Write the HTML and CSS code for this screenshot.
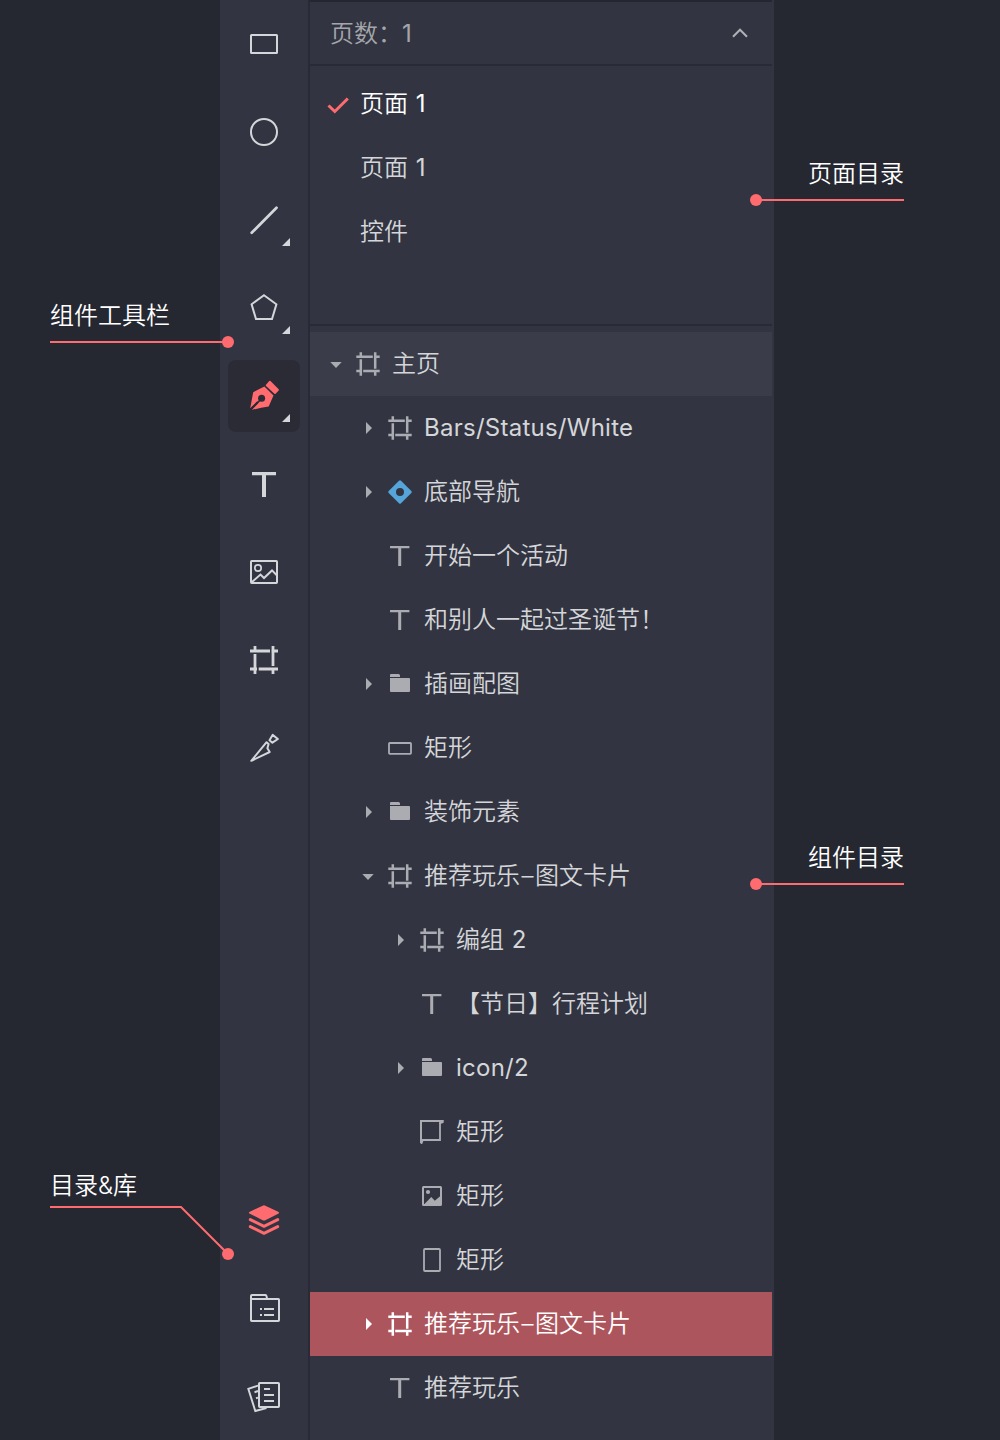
FILE: index.html
```html
<!DOCTYPE html>
<html lang="zh-CN">
<head>
<meta charset="utf-8">
<title>组件目录</title>
<link rel="stylesheet" href="styles.css">
</head>
<body>
<svg class="sprite" aria-hidden="true">
  <symbol id="down" viewBox="0 0 12 12"><path d="M.3 4H11.7L6 10Z" fill="currentColor"/></symbol>
  <symbol id="right" viewBox="0 0 12 12"><path d="M4 0L10 6L4 12Z" fill="currentColor"/></symbol>
  <symbol id="frame" viewBox="0 0 24 24"><path d="M.3 4.8H16.8M18.6 4.8H23.7M4.8.3V5M4.8 7.2V23.7M.3 19H5M7.2 19H23.7M19.2.3V16.8M19.2 19V23.7" fill="none" stroke="currentColor" stroke-width="2.5"/></symbol>
  <symbol id="text" viewBox="0 0 24 24"><path d="M2 2H21.4V4.2H13.2V22H10.2V4.2H2Z" fill="currentColor"/></symbol>
  <symbol id="folder" viewBox="0 0 24 24"><path d="M2 5V3Q2 2 3 2H10.5Q12 2 12 3.5V5ZM2 6H21Q22 6 22 7V19Q22 20 21 20H3Q2 20 2 19Z" fill="currentColor"/></symbol>
  <symbol id="component" viewBox="0 0 24 24"><path fill-rule="evenodd" d="M11 .7Q12-.3 13 .7L23.3 11Q24.3 12 23.3 13L13 23.3Q12 24.3 11 23.3L.7 13Q-.3 12 .7 11ZM12 8A4 4 0 1 0 12 16A4 4 0 1 0 12 8Z" fill="#55a5da"/></symbol>
  <symbol id="rect" viewBox="0 0 24 24"><rect x="1" y="7" width="22" height="10.8" rx=".8" fill="none" stroke="currentColor" stroke-width="1.8"/></symbol>
  <symbol id="portrait" viewBox="0 0 24 24"><rect x="4" y="1" width="16" height="22" rx="1" fill="none" stroke="currentColor" stroke-width="1.8"/></symbol>
  <symbol id="shape" viewBox="0 0 24 24"><path d="M2 20H20V3" fill="none" stroke="currentColor" stroke-width="1.8"/><path d="M22.8 2L20 3M1.6 23L2.5 20.5M1 22.5V1H23" fill="none" stroke="currentColor" stroke-width="2" stroke-linecap="round"/></symbol>
  <symbol id="image" viewBox="0 0 24 24"><rect x="3" y="3" width="18" height="18" rx=".5" fill="none" stroke="currentColor" stroke-width="2"/><circle cx="8" cy="8" r="2.1" fill="currentColor"/><path d="M4 20.5L11.3 13L14.8 16.8L21 11.5V21H4Z" fill="currentColor"/></symbol>
</svg>

<main class="editor">
  <nav class="toolbar">
    <div class="tools">
      <button class="tool"><svg viewBox="0 0 88 88"><rect x="31" y="35" width="26" height="18" rx=".5"/></svg></button>
      <button class="tool"><svg viewBox="0 0 88 88"><circle cx="44" cy="44" r="13"/></svg></button>
      <button class="tool"><svg viewBox="0 0 88 88"><path d="M31.7 56.8L56.5 31.7" stroke-width="2.7" stroke-linecap="round"/><path class="solid" d="M70 62V70H62Z"/></svg></button>
      <button class="tool"><svg viewBox="0 0 88 88"><path d="M44 31.2L56.4 40.3L52 55H36L31.6 40.3Z"/><path class="solid" d="M70 62V70H62Z"/></svg></button>
      <button class="tool active"><svg viewBox="0 0 88 88"><rect class="tile" x="8" y="8" width="72" height="72" rx="8"/><path class="accent" d="M49.2 29Q49.9 28.5 50.5 29.1L58.7 37.2Q59.3 38 58.7 38.6L55.6 41.8Q55 42.3 54.4 41.7L46 34Q45.4 33.3 46 32.7Z"/><path class="accent" d="M44.4 34.6L53.5 43.4L48.7 54.4Q40 55.6 31.8 58L38.7 50.8L37.2 49.3L30.2 56.3L33.2 40.2Q38.5 37.5 44.4 34.6Z"/><circle class="hole" cx="41.6" cy="46.2" r="3.5"/><path d="M31 57.2L41.6 46.6" stroke="#2a2b35" stroke-width="1.5"/><path class="solid" d="M70 62V70H62Z"/></svg></button>
      <button class="tool"><svg viewBox="0 0 88 88"><path class="solid" d="M32 32H56V35.2H46V57H42V35.2H32Z"/></svg></button>
      <button class="tool"><svg viewBox="0 0 88 88"><rect x="31" y="33" width="26" height="22" rx=".7"/><circle cx="38" cy="40" r="3.2" stroke-width="1.7"/><path d="M31.7 54.2L40.5 46.6L44 50L52 42.4L57 47.5"/></svg></button>
      <button class="tool"><svg viewBox="0 0 88 88"><path d="M30 35H50M51.5 35H58M35 30V36M35 38V58M30 53H37M38.7 53H58M53 30V50M53 53V58" stroke-width="2.8"/></svg></button>
      <button class="tool"><svg viewBox="0 0 88 88"><path d="M31.3 56.8L46.6 38.2L48.6 40L47.4 44.2L49.7 48L31.3 56.8Z" stroke-width="2" stroke-linejoin="round"/><path d="M52.6 30.9L57.9 35L52.4 38.7L49.5 36.2Z" stroke-width="2" stroke-linejoin="round"/></svg></button>
    </div>
    <div class="tools">
      <button class="tool"><svg viewBox="0 0 88 88"><path class="accent" d="M43.2 29.4Q44 29 44.8 29.4L58.2 35.8Q60 36.7 58.2 37.7L44.8 44.4Q44 44.8 43.2 44.4L29.8 37.7Q28 36.7 29.8 35.8Z"/><path d="M30.3 43.6L44 50.3L57.7 43.6M30.3 50.6L44 57.3L57.7 50.6" stroke="#ff6b6f" stroke-width="3" stroke-linecap="round"/></svg></button>
      <button class="tool"><svg viewBox="0 0 88 88"><rect x="31" y="35" width="28" height="22" rx=".7"/><path d="M31 35V32Q31 31 32 31H45.5Q46.5 31 47 34.5M40 45H42M44 45H54M40 51H42M44 51H54"/></svg></button>
      <button class="tool"><svg viewBox="0 0 88 88"><rect x="39" y="31" width="20" height="24" rx=".7"/><path d="M38 33.7L28.3 36.8L35.3 59L46.5 56M44 37H50M44 43H54M44 49H54" stroke-width="1.9"/><path d="M34.5 40.2L38 39M36 46.2L38 45.6"/></svg></button>
    </div>
  </nav>

  <section class="panel">
    <header class="pages-head"><span>页数：<span class="digit flush">1</span></span><svg class="chevron" viewBox="0 0 16 10"><path d="M1 8.7L8 1.7L15 8.7"/></svg></header>
    <ul class="pages">
      <li class="page current"><svg class="check" viewBox="0 0 24 18"><path d="M2.5 9.5L8.8 15.5L21.8 2.5"/></svg><span>页面 <span class="digit">1</span></span></li>
      <li class="page"><span>页面 <span class="digit">1</span></span></li>
      <li class="page">控件</li>
    </ul>
    <ul class="tree">
      <li class="row root"><svg class="arrow"><use href="#down"/></svg><svg class="icon"><use href="#frame"/></svg>主页</li>
      <li class="row level1"><svg class="arrow"><use href="#right"/></svg><svg class="icon"><use href="#frame"/></svg><span class="latin">Bars/Status/White</span></li>
      <li class="row level1"><svg class="arrow"><use href="#right"/></svg><svg class="icon"><use href="#component"/></svg>底部导航</li>
      <li class="row level1"><span class="arrow"></span><svg class="icon"><use href="#text"/></svg>开始一个活动</li>
      <li class="row level1"><span class="arrow"></span><svg class="icon"><use href="#text"/></svg>和别人一起过圣诞节！</li>
      <li class="row level1"><svg class="arrow"><use href="#right"/></svg><svg class="icon"><use href="#folder"/></svg>插画配图</li>
      <li class="row level1"><span class="arrow"></span><svg class="icon"><use href="#rect"/></svg>矩形</li>
      <li class="row level1"><svg class="arrow"><use href="#right"/></svg><svg class="icon"><use href="#folder"/></svg>装饰元素</li>
      <li class="row level1"><svg class="arrow"><use href="#down"/></svg><svg class="icon"><use href="#frame"/></svg>推荐玩乐<span class="dash">–</span>图文卡片</li>
      <li class="row level2"><svg class="arrow"><use href="#right"/></svg><svg class="icon"><use href="#frame"/></svg><span>编组 <span class="digit">2</span></span></li>
      <li class="row level2"><span class="arrow"></span><svg class="icon"><use href="#text"/></svg>【节日】行程计划</li>
      <li class="row level2"><svg class="arrow"><use href="#right"/></svg><svg class="icon"><use href="#folder"/></svg><span class="latin">icon/2</span></li>
      <li class="row level2"><span class="arrow"></span><svg class="icon"><use href="#shape"/></svg>矩形</li>
      <li class="row level2"><span class="arrow"></span><svg class="icon"><use href="#image"/></svg>矩形</li>
      <li class="row level2"><span class="arrow"></span><svg class="icon"><use href="#portrait"/></svg>矩形</li>
      <li class="row level1 selected"><svg class="arrow"><use href="#right"/></svg><svg class="icon"><use href="#frame"/></svg>推荐玩乐<span class="dash">–</span>图文卡片</li>
      <li class="row level1"><span class="arrow"></span><svg class="icon"><use href="#text"/></svg>推荐玩乐</li>
    </ul>
  </section>
</main>

<aside class="callout tools-note"><span>组件工具栏</span><svg width="184" height="12" viewBox="0 0 184 12"><path d="M0 6H178"/><circle cx="178" cy="6" r="6"/></svg></aside>
<aside class="callout library-note"><span>目录&amp;库</span><svg width="184" height="60" viewBox="0 0 184 60"><path d="M0 6H131L178 53"/><circle cx="178" cy="53" r="6"/></svg></aside>
<aside class="callout right-note pages-note"><span>页面目录</span><svg width="154" height="12" viewBox="0 0 154 12"><path d="M6 6H154"/><circle cx="6" cy="6" r="6"/></svg></aside>
<aside class="callout right-note tree-note"><span>组件目录</span><svg width="154" height="12" viewBox="0 0 154 12"><path d="M6 6H154"/><circle cx="6" cy="6" r="6"/></svg></aside>
</body>
</html>
```

FILE: styles.css
```css
* { box-sizing: border-box; }

body {
  margin: 0;
  position: relative;
  height: 1440px;
  overflow: hidden;
  background: #252731;
  color: #d5d6d9;
  font: 350 24px/32px Inter, "Noto Sans CJK SC DemiLight", "Noto Sans CJK SC", sans-serif;
}

ul { list-style: none; margin: 0; padding: 0; }
svg { display: block; flex: none; }
.sprite { display: none; }

.editor {
  display: flex;
  width: 554px;
  height: 1440px;
  margin-left: 220px;
  background: #323541;
}

.toolbar {
  display: flex;
  flex-direction: column;
  justify-content: space-between;
  width: 90px;
  border-right: 2px solid #292a35;
}

.tool {
  display: block;
  width: 88px;
  height: 88px;
  padding: 0;
  border: 0;
  background: none;
}
.tool svg { width: 88px; height: 88px; fill: none; stroke: #d5d6da; stroke-width: 2; }
.tool .solid { fill: #d5d6da; stroke: none; }
.tool .accent { fill: #ff6b6f; stroke: none; }
.tool .tile, .tool .hole { fill: #2a2b35; stroke: none; }

.panel { width: 462px; }

.pages-head {
  display: flex;
  align-items: center;
  justify-content: space-between;
  height: 66px;
  padding: 0 24px 0 20px;
  border-top: 2px solid #252630;
  border-bottom: 2px solid #292a35;
  color: #a5a6ab;
}
.pages-head > span { padding-top: 2px; }
.chevron { width: 16px; height: 10px; fill: none; stroke: #b0b1b6; stroke-width: 2; }

.pages { height: 260px; padding-top: 6px; border-bottom: 2px solid #292a35; }
.page { display: flex; align-items: center; height: 64px; padding-left: 50px; }
.page.current { padding-left: 16px; gap: 10px; color: #fff; }
.check { width: 24px; height: 18px; margin-top: 1px; fill: none; stroke: #ff6b6f; stroke-width: 3; }

.tree { padding-top: 6px; }
.row { display: flex; align-items: center; height: 64px; padding-left: 20px; white-space: pre; }
.level1 { padding-left: 52px; }
.level2 { padding-left: 84px; }
.root { background: #3a3d49; }
.arrow { width: 12px; height: 12px; margin-right: 14px; color: #abacb2; }
.icon { width: 24px; height: 24px; margin-right: 12px; color: #abacb2; }
.latin { font-weight: 400; letter-spacing: .25px; }
.digit { margin-left: 1px; font-weight: 400; }
.digit.flush { margin-left: 0; }
.dash { width: 15px; text-align: center; }
.selected { background: #ad555c; color: #fff; }
.selected .arrow, .selected .icon { color: #fff; }

.callout { position: absolute; left: 50px; color: #fff; }
.callout span { display: block; }
.callout svg { margin-top: 4px; fill: #ff6b6f; }
.callout path { fill: none; stroke: #ff6b6f; stroke-width: 2; }
.tools-note { top: 300px; }
.library-note { top: 1170px; }
.library-note svg { margin-top: -1px; }
.right-note { left: 750px; width: 154px; }
.right-note span { text-align: right; }
.pages-note { top: 158px; }
.tree-note { top: 842px; }
```
